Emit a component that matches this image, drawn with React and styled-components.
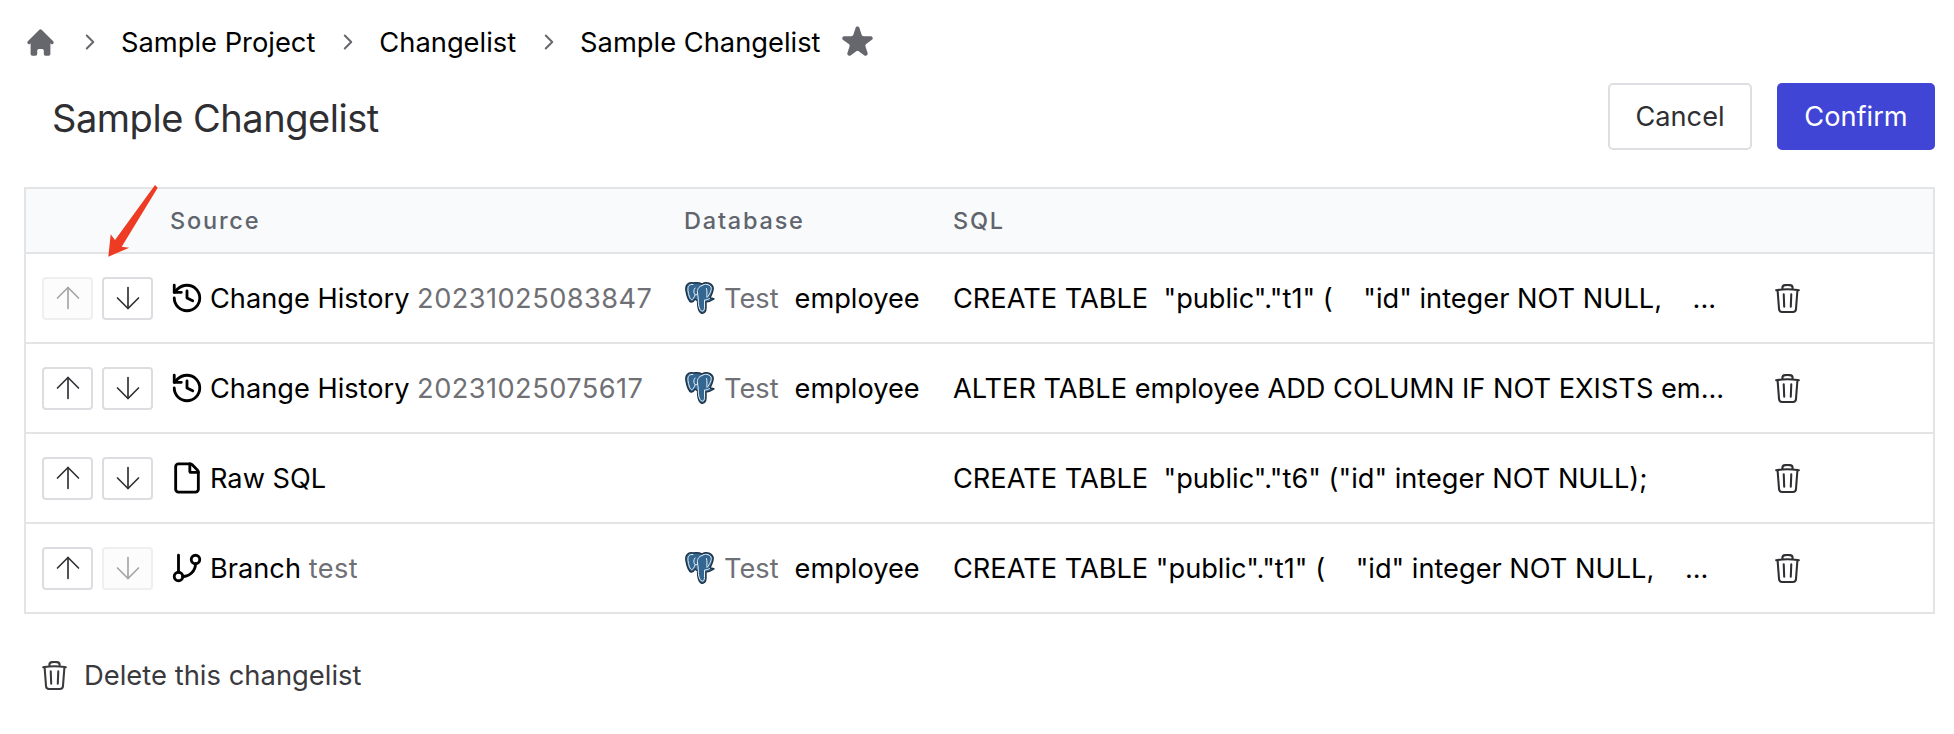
import styled, { createGlobalStyle } from 'styled-components';
import { ArrowDown, ArrowUp, ChevronRight, File, GitBranch, History } from 'lucide-react';
import { HiHome, HiStar } from 'react-icons/hi';
import { HiOutlineTrash } from 'react-icons/hi2';

const rows = [
  {
    icon: 'history',
    source: 'Change History',
    detail: '20231025083847',
    database: true,
    sql: 'CREATE TABLE  "public"."t1" (    "id" integer NOT NULL,    ...',
    upDisabled: true,
  },
  {
    icon: 'history',
    source: 'Change History',
    detail: '20231025075617',
    database: true,
    sql: 'ALTER TABLE employee ADD COLUMN IF NOT EXISTS em...',
  },
  {
    icon: 'file',
    source: 'Raw SQL',
    sql: 'CREATE TABLE  "public"."t6" ("id" integer NOT NULL);',
  },
  {
    icon: 'branch',
    source: 'Branch',
    detail: 'test',
    database: true,
    sql: 'CREATE TABLE "public"."t1" (    "id" integer NOT NULL,    ...',
    downDisabled: true,
  },
];

const sourceIcons = { history: History, file: File, branch: GitBranch };

function PostgresLogo() {
  return (
    <LogoSvg viewBox="0 0 32 34">
      <path
        d="M9 2C4 1 1 4 2 10c1 5 2 10 5 11 2 .5 3-1 4-3 1 1 2 1.5 2.5 1.5 0 4.5 0 10.500 3.500 12.500 3 1 5-1 5-5v-6c2 0 5-1 8-3-2-1-3-1-4-1 2-4 4-8 3-11-2-5-8-5-11-3-3-1.500-6-1.500-9-1z"
        fill="#336791"
        stroke="#1f3347"
        strokeWidth="1.400"
        strokeLinejoin="round"
      />
      <path
        d="M9 3.500C5.500 3 3.500 5 4 9.500c.6 4 1.500 8 3.500 9 1.500.3 2.500-2 3.500-4.500M18 4.500c-3.500 1-5 4-4.500 7.500.3 3 1 5 .8 8 0 3.500.7 8.500 3.200 10 2 .6 3-1 3-3.500v-7.500c2 0 3.500-.5 5-1.500M18 4.500c3-2 7-1.500 9 1.500 1 3-1.500 7.500-4 10.500-.5-3 .5-6-.5-9M11 7c-1.500 2-1.500 4-.5 6 .6 1.500 2.500 1 3 0"
        fill="none"
        stroke="#e8eff6"
        strokeWidth="1"
        strokeLinecap="round"
      />
    </LogoSvg>
  );
}

export default function App() {
  return (
    <Page>
      <GlobalStyle />
      <Breadcrumb>
        <HiHome size={33} color="#66676c" />
        <Crumbs>
          {['Sample Project', 'Changelist', 'Sample Changelist'].map((name) => (
            <Crumb key={name}>
              <ChevronRight size={26} color="#66676c" strokeWidth={1.800} />
              <span>{name}</span>
            </Crumb>
          ))}
        </Crumbs>
        <StarIcon size={41} color="#66676c" />
      </Breadcrumb>

      <Header>
        <Title>Sample Changelist</Title>
        <Actions>
          <CancelButton>Cancel</CancelButton>
          <ConfirmButton>Confirm</ConfirmButton>
        </Actions>
      </Header>

      <TableWrap>
        <PointerArrow viewBox="0 0 60 80">
          <path d="M47 0 49.700 2.700 13.700 61.700 21.300 62.700 0.300 71.700 2.700 49.300 7 55Z" fill="#ee3b24" />
        </PointerArrow>
        <HeadRow>
          <span />
          <HeadCell>Source</HeadCell>
          <HeadCell>Database</HeadCell>
          <HeadCell>SQL</HeadCell>
        </HeadRow>
        {rows.map((row) => {
          const SourceIcon = sourceIcons[row.icon];
          return (
            <Row key={row.detail + row.source}>
              <MoveButtons>
                <MoveButton $disabled={row.upDisabled}>
                  <ArrowUp size={36} strokeWidth={1.100} />
                </MoveButton>
                <MoveButton $disabled={row.downDisabled}>
                  <ArrowDown size={36} strokeWidth={1.100} />
                </MoveButton>
              </MoveButtons>
              <Source>
                <SourceIcon size={34} strokeWidth={2} />
                <span>
                  {row.source} {row.detail && <Detail>{row.detail}</Detail>}
                </span>
              </Source>
              <Database>
                {row.database && (
                  <>
                    <PostgresLogo />
                    <Muted>Test</Muted>
                    <DbName>employee</DbName>
                  </>
                )}
              </Database>
              <Sql>{row.sql}</Sql>
              <RowTrash>
                <HiOutlineTrash size={33} />
              </RowTrash>
            </Row>
          );
        })}
      </TableWrap>

      <DeleteLink>
        <HiOutlineTrash size={33} />
        <span>Delete this changelist</span>
      </DeleteLink>
    </Page>
  );
}

const GlobalStyle = createGlobalStyle`
  body {
    margin: 0;
    background: #fff;
    font-family: Inter, "Liberation Sans", sans-serif;
    color: #000;
  }
`;

const Page = styled.div`
  padding: 26px 19px 0 24px;
`;

const Breadcrumb = styled.nav`
  display: flex;
  align-items: center;
  height: 32px;
  font-size: 27.3px;
`;

const Crumbs = styled.div`
  display: flex;
  margin-left: 13px;
`;

const Crumb = styled.div`
  display: flex;
  align-items: center;
  gap: 18px;
  padding-left: 7px;
  margin-right: 13px;
  white-space: nowrap;
`;

const StarIcon = styled(HiStar)`
  margin-left: 3px;
`;

const Header = styled.div`
  display: flex;
  justify-content: space-between;
  align-items: center;
  margin-top: 25px;
`;

const Title = styled.h1`
  margin: 2px 0 0 28px;
  font-size: 38px;
  font-weight: 400;
  letter-spacing: -0.47px;
  color: #2f2f33;
`;

const Actions = styled.div`
  display: flex;
  gap: 25px;
`;

const ActionButton = styled.button`
  height: 67px;
  border-radius: 5px;
  font-family: inherit;
  font-size: 27.2px;
`;

const CancelButton = styled(ActionButton)`
  width: 144px;
  background: #fff;
  border: 2px solid #dedfe2;
  color: #2f2f33;
`;

const ConfirmButton = styled(ActionButton)`
  width: 158px;
  background: #4045d6;
  border: none;
  color: #fff;
`;

const TableWrap = styled.div`
  position: relative;
  margin-top: 37px;
  border: 2px solid #e3e4e6;
`;

const PointerArrow = styled.svg`
  position: absolute;
  left: 82px;
  top: -4px;
  width: 60px;
  height: 80px;
`;

const HeadRow = styled.div`
  display: grid;
  grid-template-columns: 144px 514px 269px 1fr;
  align-items: center;
  height: 63px;
  background: #f9fafb;
  border-bottom: 2px solid #e3e4e6;
`;

const HeadCell = styled.div`
  font-size: 23.5px;
  font-weight: 500;
  letter-spacing: 1.800px;
  color: #5f646d;
`;

const Row = styled.div`
  display: grid;
  grid-template-columns: 144px 514px 269px 818px 1fr;
  align-items: center;
  height: 88px;
  font-size: 27.2px;
  border-bottom: 2px solid #e3e4e6;

  &:last-child {
    border-bottom: none;
  }
`;

const MoveButtons = styled.div`
  display: flex;
  gap: 9px;
  padding-left: 16px;
`;

const MoveButton = styled.div`
  display: flex;
  align-items: center;
  justify-content: center;
  width: 51px;
  height: 43px;
  box-sizing: border-box;
  border: 2px solid ${({ $disabled }) => ($disabled ? '#efeff0' : '#dcdde0')};
  border-radius: 4px;
  color: ${({ $disabled }) => ($disabled ? '#a3a4a6' : '#2f2f33')};
  background: ${({ $disabled }) => ($disabled ? '#fcfcfc' : '#fff')};
`;

const Source = styled.div`
  display: flex;
  align-items: center;
  gap: 6px;
  white-space: nowrap;
`;

const Muted = styled.span`
  color: #6f7075;
`;

const Detail = styled(Muted)`
  letter-spacing: 0.45px;
`;

const Database = styled.div`
  display: flex;
  align-items: center;
  white-space: nowrap;
`;

const LogoSvg = styled.svg`
  width: 32px;
  height: 34px;
  margin-right: 8px;
`;

const DbName = styled.span`
  margin-left: 16px;
`;

const Sql = styled.div`
  white-space: pre;
  overflow: hidden;
`;

const RowTrash = styled.div`
  display: flex;
  color: #2f2f33;
`;

const DeleteLink = styled.div`
  display: flex;
  align-items: center;
  gap: 13px;
  margin: 44px 0 0 14px;
  font-size: 27.4px;
  color: #3a3a3e;
`;
